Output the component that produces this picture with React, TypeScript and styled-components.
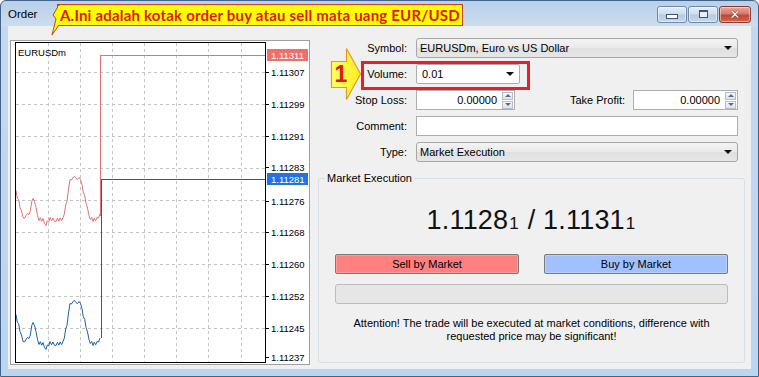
import React from 'react';
import styled, { createGlobalStyle } from 'styled-components';

const GlobalStyle = createGlobalStyle`
  html, body {
    margin: 0;
    padding: 0;
    background: #fff;
  }
  body {
    font-family: 'Liberation Sans', Arial, sans-serif;
    font-size: 11px;
    color: #000;
  }
`;

const Window = styled.div`
  position: relative;
  width: 759px;
  height: 377px;
  box-sizing: border-box;
  border: 1px solid #44638a;
  border-radius: 6px 6px 0 0;
  background: linear-gradient(#b8d0ea 0, #cbdcef 25px, #c2d8ee 26px, #bcd5ee 100%);
  display: flex;
  flex-direction: column;
  overflow: hidden;
`;

const TitleBar = styled.div`
  height: 25px;
  display: flex;
  align-items: center;
  padding: 0 5px 0 7px;
  flex-shrink: 0;
`;

const TitleText = styled.span`
  font-size: 11.5px;
  color: #000;
  flex: 1;
`;

const CaptionButtons = styled.div`
  display: flex;
  gap: 1px;
  margin-top: 1px;
  margin-right: 2px;
`;

const CaptionButton = styled.div<{ $close?: boolean }>`
  width: ${(p) => (p.$close ? 32 : 30)}px;
  height: 17px;
  box-sizing: border-box;
  border: 1px solid ${(p) => (p.$close ? '#8a3a32' : '#6f8aa8')};
  border-radius: 3px;
  background: ${(p) =>
    p.$close
      ? 'linear-gradient(#e9a99c 0%, #d7786a 45%, #c24634 55%, #cf6b4f 100%)'
      : 'linear-gradient(#e6eef8 0%, #cfdcec 45%, #b7cae1 55%, #c8d8ea 100%)'};
  display: flex;
  align-items: center;
  justify-content: center;
  box-shadow: inset 0 0 0 1px rgba(255, 255, 255, 0.45);
`;

const MinGlyph = styled.div`
  width: 10px;
  height: 3px;
  margin-top: 5px;
  background: #fff;
  border: 1px solid #40546c;
`;

const MaxGlyph = styled.div`
  width: 7px;
  height: 5px;
  border: 1px solid #40546c;
  border-top-width: 2px;
  background: #e8eef6;
`;

const CloseGlyph = styled.span`
  color: #fff;
  font-family: 'DejaVu Sans', sans-serif;
  font-weight: bold;
  font-size: 13px;
  line-height: 13px;
  text-shadow: 0 0 1px #4a1a14, 0 0 1px #4a1a14;
`;

const Client = styled.div`
  flex: 1;
  margin: 0 7px 7px 7px;
  background: #f0f0f0;
  display: flex;
  align-items: flex-start;
  padding: 12px 0 0 2px;
`;

const ChartPanel = styled.div`
  width: 300px;
  height: 325px;
  margin-top: 2px;
  box-sizing: border-box;
  border: 1px solid #a0a0a0;
  background: #fff;
  flex-shrink: 0;

  svg {
    display: block;
  }
`;

const FormColumn = styled.div`
  margin-left: 8px;
  width: 427px;
  display: flex;
  flex-direction: column;
`;

const FieldRow = styled.div`
  display: flex;
  align-items: center;
  height: 20px;
  margin-bottom: 6px;
`;

const FieldLabel = styled.label<{ $width?: number }>`
  width: ${(p) => p.$width ?? 89}px;
  margin-right: ${(p) => (p.$width ? 8 : 9)}px;
  text-align: right;
  font-size: 11px;
  white-space: nowrap;
`;

const Combo = styled.div<{ $width: number; $editable?: boolean }>`
  position: relative;
  width: ${(p) => p.$width}px;
  height: 20px;
  box-sizing: border-box;
  border: 1px solid ${(p) => (p.$editable ? '#abadb3' : '#a7a7a7')};
  border-radius: ${(p) => (p.$editable ? 2 : 3)}px;
  background: ${(p) => (p.$editable ? '#fff' : 'linear-gradient(#f4f4f4, #e9e9e9 50%, #e0e0e0 51%, #e6e6e6)')};
  display: flex;
  align-items: center;
  padding-left: ${(p) => (p.$editable ? 5 : 3)}px;
  font-size: 11px;
`;

const ComboText = styled.span`
  flex: 1;
  white-space: nowrap;
`;

const DropArrow = styled.span`
  width: 0;
  height: 0;
  margin-right: 5px;
  border-left: 4px solid transparent;
  border-right: 4px solid transparent;
  border-top: 4px solid #111;
`;

const SpinBox = styled.div<{ $width: number }>`
  width: ${(p) => p.$width}px;
  height: 20px;
  box-sizing: border-box;
  border: 1px solid #abadb3;
  background: #fff;
  display: flex;
  align-items: center;
  font-size: 11px;
`;

const SpinValue = styled.span`
  flex: 1;
  text-align: right;
  padding-right: 5px;
`;

const SpinButtons = styled.div`
  display: flex;
  flex-direction: column;
  gap: 1px;
  margin-right: 1px;
`;

const SpinButton = styled.div<{ $down?: boolean }>`
  width: 11px;
  height: 8px;
  box-sizing: border-box;
  border: 1px solid #b8bcc4;
  background: linear-gradient(#f6f8fa, #dde3ea);
  display: flex;
  align-items: center;
  justify-content: center;

  &::after {
    content: '';
    width: 0;
    height: 0;
    border-left: 3px solid transparent;
    border-right: 3px solid transparent;
    ${(p) => (p.$down ? 'border-top: 3px solid #5a6a82;' : 'border-bottom: 3px solid #5a6a82;')}
  }
`;

const TextBox = styled.div<{ $width: number }>`
  width: ${(p) => p.$width}px;
  height: 20px;
  box-sizing: border-box;
  border: 1px solid #abadb3;
  background: #fff;
`;

const ExecutionGroup = styled.fieldset`
  margin: 4px 0 0 0;
  padding: 0 6px;
  width: 427px;
  height: 191px;
  box-sizing: border-box;
  border: 1px solid #d5dfe5;
  border-radius: 3px;
  min-width: 0;
`;

const GroupLegend = styled.legend`
  padding: 0 2px;
  font-size: 11px;
  line-height: 13px;
`;

const GroupBody = styled.div`
  padding: 0 10px;
  display: flex;
  flex-direction: column;
`;

const PriceLine = styled.div`
  margin-top: 19px;
  height: 32px;
  line-height: 32px;
  text-align: center;
  font-size: 27px;
  color: #111;
  letter-spacing: 0.2px;
`;

const PricePip = styled.span`
  font-size: 17px;
  margin: 0 1px;
`;

const ButtonRow = styled.div`
  margin-top: 18px;
  display: flex;
  justify-content: space-between;
`;

const TradeButton = styled.div<{ $side: 'sell' | 'buy' }>`
  width: 184px;
  height: 20px;
  box-sizing: border-box;
  border: 1px solid #7a7a7a;
  border-radius: 2px;
  background: ${(p) => (p.$side === 'sell' ? '#ff8080' : '#a0c0ff')};
  box-shadow: inset 0 0 0 1px ${(p) => (p.$side === 'sell' ? '#ff9a9a' : '#b8d0ff')};
  display: flex;
  align-items: center;
  justify-content: center;
  font-size: 11px;
`;

const ProgressTrack = styled.div`
  margin-top: 10px;
  height: 20px;
  box-sizing: border-box;
  border: 1px solid #bcbcbc;
  border-radius: 3px;
  background: #e6e6e6;
`;

const Notice = styled.p`
  margin: 13px 0 0;
  text-align: center;
  font-size: 11px;
  line-height: 13px;
`;

/* annotations laid over the dialog */

const TitleCallout = styled.div`
  position: absolute;
  left: 56px;
  top: 3px;
  width: 406px;
  height: 22px;
  box-sizing: border-box;
  border: 1px solid #c8401c;
  background: #ffff00;
  display: flex;
  align-items: center;
  padding-left: 2px;
  font-family: Lato, 'Liberation Sans', sans-serif;
  font-weight: 700;
  font-size: 15px;
  letter-spacing: 0.2px;
  color: #e01818;
  white-space: nowrap;

  svg {
    position: absolute;
    left: -8px;
    top: -2px;
  }
`;

const VolumeHighlight = styled.div`
  position: absolute;
  left: 360px;
  top: 60px;
  width: 169px;
  height: 29px;
  box-sizing: border-box;
  border: 3px solid #e3202c;
  pointer-events: none;
`;

const StepArrow = styled.div`
  position: absolute;
  left: 329px;
  top: 46px;
  width: 32px;
  height: 54px;

  svg {
    position: absolute;
    left: 0;
    top: 0;
  }
`;

const StepNumber = styled.span`
  position: absolute;
  left: 3px;
  top: 14px;
  width: 16px;
  text-align: center;
  font-family: 'Liberation Sans', Arial, sans-serif;
  font-weight: 700;
  font-size: 23px;
  line-height: 26px;
  color: #e01818;
`;

/* chart data */

const gridX = [48, 80, 112, 144, 176, 208, 241];
const gridY = [72, 104, 136, 168, 200, 232, 264, 296, 328];
const axisLabels: [string, number][] = [
  ['1.11307', 72],
  ['1.11299', 104],
  ['1.11291', 136],
  ['1.11283', 167],
  ['1.11276', 201],
  ['1.11268', 232],
  ['1.11260', 264],
  ['1.11252', 296],
  ['1.11245', 328],
  ['1.11237', 357],
];

const bidKeys: [number, number][] = [
  [16, 316], [20, 330], [23, 343], [26, 338], [29, 340], [33, 321], [36, 333],
  [39, 343], [43, 344], [46, 348], [50, 343], [56, 344], [63, 343], [67, 324],
  [70, 305], [73, 300], [76, 304], [79, 300], [82, 310], [86, 326], [89, 341],
  [93, 344], [97, 343], [100, 338],
];

const buildSeries = (shift: number) => {
  const pts: string[] = [];
  for (let i = 0; i < bidKeys.length - 1; i++) {
    const [x1, y1] = bidKeys[i];
    const [x2, y2] = bidKeys[i + 1];
    const n = Math.max(1, Math.round((x2 - x1) / 1.5));
    for (let j = 0; j < n; j++) {
      const t = j / n;
      const wig = (i * 7 + j) % 2 === 0 ? -1.5 : 1.5;
      pts.push(`${(x1 + (x2 - x1) * t).toFixed(1)},${(y1 + (y2 - y1) * t + wig - shift).toFixed(1)}`);
    }
  }
  const last = bidKeys[bidKeys.length - 1];
  pts.push(`${last[0]},${last[1] - shift}`);
  return pts.join(' ');
};

const ASK = '#e27272';
const BID = '#1f5fa8';
const chartFont = 'Liberation Sans, Arial, sans-serif';

const PriceChart = () => (
  <svg width="298" height="323" viewBox="11 41 298 323">
    <rect x="11" y="41" width="298" height="323" fill="#fff" />
    {gridX.map((x) => (
      <line key={`gx${x}`} x1={x + 0.5} y1="43" x2={x + 0.5} y2="362" stroke="#c4c4c4" strokeDasharray="3 3" />
    ))}
    {gridY.map((y) => (
      <line key={`gy${y}`} x1="16" y1={y + 0.5} x2="265" y2={y + 0.5} stroke="#c4c4c4" strokeDasharray="3 3" />
    ))}
    <text x="18" y="56" fontSize="9.5" fontFamily={chartFont} fill="#000">
      EURUSDm
    </text>
    <polyline points={buildSeries(124)} fill="none" stroke={ASK} strokeWidth="1" />
    <polyline points={buildSeries(0)} fill="none" stroke={BID} strokeWidth="1" />
    <rect x="100" y="55" width="1" height="161" fill={ASK} />
    <rect x="100" y="55" width="165" height="1" fill={ASK} />
    <rect x="101" y="179" width="1" height="159" fill={BID} />
    <rect x="101" y="179" width="164" height="1" fill={BID} />
    <rect x="15.5" y="42.5" width="250" height="320" fill="none" stroke="#000" shapeRendering="crispEdges" />
    {axisLabels.map(([label, y]) => (
      <g key={label}>
        <line x1="266" y1={y + 0.5} x2="269" y2={y + 0.5} stroke="#000" />
        <text x="271" y={y + 3.5} fontSize="9.5" fontFamily={chartFont} fill="#000">
          {label}
        </text>
      </g>
    ))}
    <rect x="267" y="49" width="41" height="12" fill="#ef6e6e" />
    <text x="271" y="58.5" fontSize="9.5" fontFamily={chartFont} fill="#fff">
      1.11311
    </text>
    <rect x="267" y="173" width="41" height="12" fill="#1f73e2" />
    <text x="271" y="182.5" fontSize="9.5" fontFamily={chartFont} fill="#fff">
      1.11281
    </text>
  </svg>
);

const App = () => (
  <>
    <GlobalStyle />
    <Window>
      <TitleBar>
        <TitleText>Order</TitleText>
        <CaptionButtons>
          <CaptionButton>
            <MinGlyph />
          </CaptionButton>
          <CaptionButton>
            <MaxGlyph />
          </CaptionButton>
          <CaptionButton $close>
            <CloseGlyph>✕</CloseGlyph>
          </CaptionButton>
        </CaptionButtons>
      </TitleBar>

      <Client>
        <ChartPanel>
          <PriceChart />
        </ChartPanel>

        <FormColumn>
          <FieldRow>
            <FieldLabel>Symbol:</FieldLabel>
            <Combo $width={322}>
              <ComboText>EURUSDm, Euro vs US Dollar</ComboText>
              <DropArrow />
            </Combo>
          </FieldRow>
          <FieldRow>
            <FieldLabel>Volume:</FieldLabel>
            <Combo $width={104} $editable>
              <ComboText>0.01</ComboText>
              <DropArrow />
            </Combo>
          </FieldRow>
          <FieldRow>
            <FieldLabel>Stop Loss:</FieldLabel>
            <SpinBox $width={99}>
              <SpinValue>0.00000</SpinValue>
              <SpinButtons>
                <SpinButton />
                <SpinButton $down />
              </SpinButtons>
            </SpinBox>
            <FieldLabel $width={110}>Take Profit:</FieldLabel>
            <SpinBox $width={105}>
              <SpinValue>0.00000</SpinValue>
              <SpinButtons>
                <SpinButton />
                <SpinButton $down />
              </SpinButtons>
            </SpinBox>
          </FieldRow>
          <FieldRow>
            <FieldLabel>Comment:</FieldLabel>
            <TextBox $width={322} />
          </FieldRow>
          <FieldRow>
            <FieldLabel>Type:</FieldLabel>
            <Combo $width={322}>
              <ComboText>Market Execution</ComboText>
              <DropArrow />
            </Combo>
          </FieldRow>

          <ExecutionGroup>
            <GroupLegend>Market Execution</GroupLegend>
            <GroupBody>
              <PriceLine>
                1.1128<PricePip>1</PricePip> / 1.1131<PricePip>1</PricePip>
              </PriceLine>
              <ButtonRow>
                <TradeButton $side="sell">Sell by Market</TradeButton>
                <TradeButton $side="buy">Buy by Market</TradeButton>
              </ButtonRow>
              <ProgressTrack />
              <Notice>
                Attention! The trade will be executed at market conditions, difference with
                <br />
                requested price may be significant!
              </Notice>
            </GroupBody>
          </ExecutionGroup>
        </FormColumn>
      </Client>

      <TitleCallout>
        <svg width="10" height="34" viewBox="0 0 10 34">
          <polygon points="9,2 3,12 6,16 2,32 9,22" fill="#ffff00" stroke="#c8401c" strokeWidth="1" />
          <rect x="8" y="3" width="3" height="19" fill="#ffff00" />
        </svg>
        A.Ini adalah kotak order buy atau sell mata uang EUR/USD
      </TitleCallout>

      <VolumeHighlight />

      <StepArrow>
        <svg width="32" height="54" viewBox="0 0 32 54">
          <defs>
            <linearGradient id="arrowFill" x1="0" y1="0" x2="1" y2="0">
              <stop offset="0" stopColor="#ffff60" />
              <stop offset="1" stopColor="#ffee20" />
            </linearGradient>
          </defs>
          <polygon
            points="1.5,14.5 16.5,14.5 16.5,1.5 30.5,27 16.5,52.5 16.5,40.5 1.5,40.5"
            fill="url(#arrowFill)"
            stroke="#e39a2a"
            strokeWidth="1.2"
          />
        </svg>
        <StepNumber>1</StepNumber>
      </StepArrow>
    </Window>
  </>
);

export default App;
